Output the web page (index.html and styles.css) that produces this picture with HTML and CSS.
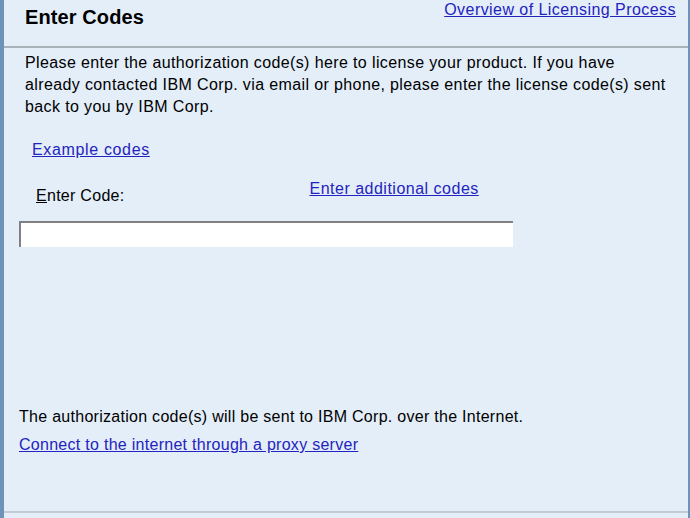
FILE: index.html
```html
<!DOCTYPE html>
<html>
<head>
<meta charset="utf-8">
<link rel="stylesheet" href="styles.css">
</head>
<body>
<div class="frame">
  <div class="header">
    <h1 class="title">Enter Codes</h1>
    <a class="link top-link" href="#">Overview of Licensing Process</a>
  </div>
  <div class="content">
    <p class="intro">Please enter the authorization code(s) here to license your product. If you have<br>already contacted IBM Corp. via email or phone, please enter the license code(s) sent<br>back to you by IBM Corp.</p>
    <a class="link example" href="#">Example codes</a>
    <div class="code-row">
      <label class="code-label" for="code"><u>E</u>nter Code:</label>
      <a class="link additional" href="#">Enter additional codes</a>
    </div>
    <input class="code-input" id="code" type="text">
    <div class="spacer"></div>
    <p class="notice">The authorization code(s) will be sent to IBM Corp. over the Internet.</p>
    <a class="link proxy" href="#">Connect to the internet through a proxy server</a>
  </div>
  <div class="footer"></div>
</div>
</body>
</html>
```
FILE: styles.css
```css
html, body {
  margin: 0;
  padding: 0;
  background: #e3eef9;
}
body {
  font-family: "Liberation Sans", Arial, sans-serif;
  font-size: 16px;
  letter-spacing: 0.28px;
  color: #000;
}
.frame {
  box-sizing: border-box;
  width: 690px;
  height: 518px;
  border-left: 4px solid #6f93b8;
  border-right: 2px solid #6f93b8;
  display: flex;
  flex-direction: column;
  background: #e3eef9;
}
.header {
  height: 46px;
  border-bottom: 2px solid #a9b1b9;
  display: flex;
  justify-content: space-between;
  align-items: flex-start;
  padding-left: 21px;
  padding-right: 12px;
}
.title {
  margin: 6px 0 0 0;
  font-size: 20px;
  font-weight: bold;
  letter-spacing: 0.1px;
}
.link {
  color: #2323c0;
  text-decoration: underline;
}
.top-link {
  margin-top: 1px;
  letter-spacing: 0.45px;
}
.content {
  flex: 1;
  display: flex;
  flex-direction: column;
  align-items: flex-start;
  padding: 4px 0 0 15px;
}
.intro {
  margin: 0 0 0 6px;
  line-height: 22px;
  white-space: nowrap;
  letter-spacing: 0.38px;
}
.example {
  margin: 23px 0 0 13px;
  letter-spacing: 0.65px;
}
.code-row {
  display: flex;
  margin-top: 15px;
}
.code-label {
  margin: 13px 0 0 17px;
}
.additional {
  margin: 6px 0 0 185px;
  letter-spacing: 0.5px;
}
.code-input {
  box-sizing: border-box;
  margin: 16px 0 0 0;
  width: 494px;
  height: 26px;
  border: none;
  border-top: 2px solid #808080;
  border-left: 2px solid #808080;
  background: #fff;
}
.spacer {
  flex: 1;
}
.notice {
  margin: 0;
}
.proxy {
  margin: 10px 0 57px 0;
}
.footer {
  height: 0;
  border-top: 2px solid #c3cad1;
  margin-bottom: 5px;
}
```
